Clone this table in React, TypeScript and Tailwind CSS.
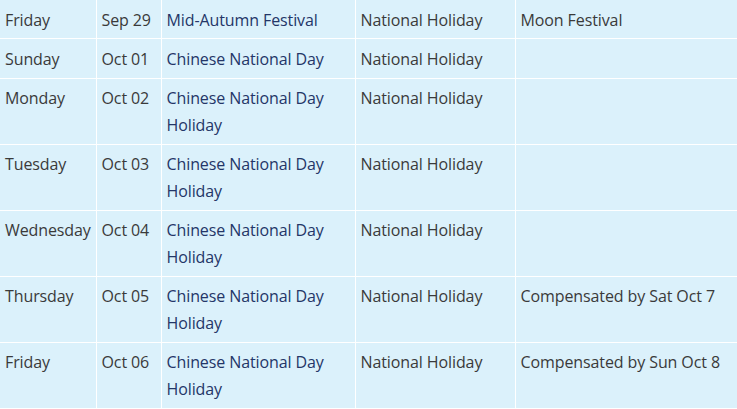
const rows = [
  { day: "Friday", date: "Sep 29", name: ["Mid-Autumn Festival"], type: "National Holiday", note: "Moon Festival" },
  { day: "Sunday", date: "Oct 01", name: ["Chinese National Day"], type: "National Holiday", note: "" },
  { day: "Monday", date: "Oct 02", name: ["Chinese National Day", "Holiday"], type: "National Holiday", note: "" },
  { day: "Tuesday", date: "Oct 03", name: ["Chinese National Day", "Holiday"], type: "National Holiday", note: "" },
  { day: "Wednesday", date: "Oct 04", name: ["Chinese National Day", "Holiday"], type: "National Holiday", note: "" },
  { day: "Thursday", date: "Oct 05", name: ["Chinese National Day", "Holiday"], type: "National Holiday", note: "Compensated by Sat Oct 7" },
  { day: "Friday", date: "Oct 06", name: ["Chinese National Day", "Holiday"], type: "National Holiday", note: "Compensated by Sun Oct 8" },
]

export default function App() {
  const cell = "align-top pl-[5px] pr-1 pt-[6.5px] pb-[5px] border border-white border-t-0"
  return (
    <div className="w-[737px] h-[409px] overflow-hidden bg-white font-['Open_Sans',sans-serif] text-[16px] leading-[26.8px] tracking-[-0.1px] text-[#3a3a3a]">
      <table className="w-[740px] table-fixed border-collapse bg-[#dbf1fb]">
        <colgroup>
          <col className="w-[96px]" />
          <col className="w-[65px]" />
          <col className="w-[194px]" />
          <col className="w-[160px]" />
          <col className="w-[225px]" />
        </colgroup>
        <tbody>
          {rows.map((r, i) => (
            <tr key={i}>
              <td className={cell + " border-l-0"}>{r.day}</td>
              <td className={cell}>{r.date}</td>
              <td className={cell + " text-[#243668]"}>
                {r.name.map((n, j) => (
                  <div key={j}>{n}</div>
                ))}
              </td>
              <td className={cell}>{r.type}</td>
              <td className={cell + " border-r-0"}>{r.note}</td>
            </tr>
          ))}
        </tbody>
      </table>
    </div>
  )
}
